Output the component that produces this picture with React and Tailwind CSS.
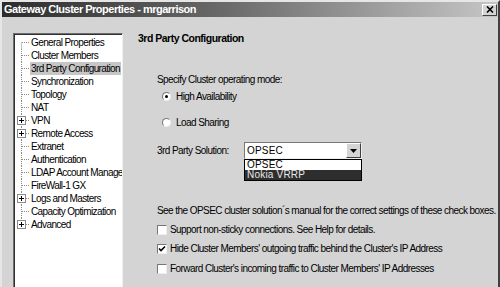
import React from 'react';

const font = { fontFamily: '"Liberation Sans", Arial, sans-serif' };

const treeItems = [
  { label: 'General Properties' },
  { label: 'Cluster Members' },
  { label: '3rd Party Configuration', selected: true },
  { label: 'Synchronization' },
  { label: 'Topology' },
  { label: 'NAT' },
  { label: 'VPN', plus: true },
  { label: 'Remote Access', plus: true },
  { label: 'Extranet' },
  { label: 'Authentication' },
  { label: 'LDAP Account Management' },
  { label: 'FireWall-1 GX' },
  { label: 'Logs and Masters', plus: true },
  { label: 'Capacity Optimization' },
  { label: 'Advanced', plus: true },
];

const TreeRow = ({ item, first, last }) => (
  <div className="flex items-center h-[13px]">
    <svg width="15" height="13" className="shrink-0">
      <line
        x1="6.5" x2="6.5"
        y1={first ? 6.5 : 0} y2={last ? 6.5 : 13}
        stroke="#8a8a8a" strokeDasharray="1 1"
      />
      <line x1="7" x2="15" y1="6.5" y2="6.5" stroke="#8a8a8a" strokeDasharray="1 1" />
      {item.plus && (
        <g>
          <rect x="2.5" y="2.5" width="8" height="8" fill="#fff" stroke="#8a8a8a" />
          <line x1="4" x2="9" y1="6.5" y2="6.5" stroke="#000" />
          <line x1="6.5" x2="6.5" y1="4" y2="9" stroke="#000" />
        </g>
      )}
    </svg>
    <span className={`px-[1px] leading-[13px] tracking-[-0.6px] ${item.selected ? 'bg-[#c6c6c6]' : ''}`}>{item.label}</span>
  </div>
);

const Radio = ({ checked, label }) => (
  <div className="flex items-center h-[13px] pl-[5px] gap-[5px]">
    <span className="w-[9px] h-[9px] rounded-full bg-white border border-t-[#777] border-l-[#777] border-r-[#eee] border-b-[#eee] flex items-center justify-center">
      {checked && <span className="w-[3px] h-[3px] rounded-full bg-black" />}
    </span>
    <span>{label}</span>
  </div>
);

const Checkbox = ({ checked, label, className = '' }) => (
  <div className={`flex items-center h-[13px] gap-[3px] ${className}`}>
    <span className="w-[10px] h-[10px] bg-white border border-t-[#777] border-l-[#777] border-r-[#eee] border-b-[#eee] flex items-center justify-center">
      {checked && (
        <svg width="8" height="8" viewBox="0 0 8 8">
          <path d="M1 3.5 L3 5.5 L7 1.5" stroke="#000" strokeWidth="1.6" fill="none" />
        </svg>
      )}
    </span>
    <span>{label}</span>
  </div>
);

export default function App() {
  return (
    <div
      className="w-[500px] h-[287px] overflow-hidden bg-[#d4d4d4] border-l-2 border-t-2 border-r-2 border-l-[#e6e6e6] border-t-[#e6e6e6] border-r-[#404040] flex flex-col text-[10px] tracking-[-0.5px] text-black"
      style={font}
    >
      {/* Title bar */}
      <div className="h-[15px] shrink-0 flex items-center justify-between pl-[2px] pr-[1px] bg-[linear-gradient(90deg,#2c2c2c,#6a6a6a_45%,#c6c6c6)]">
        <span className="text-white font-bold text-[11px] leading-none">Gateway Cluster Properties - mrgarrison</span>
        <button className="w-[15px] h-[12px] bg-[#d4d4d4] border border-t-white border-l-white border-r-[#404040] border-b-[#404040] flex items-center justify-center">
          <svg width="8" height="7" viewBox="0 0 8 7">
            <path d="M1 0.5 L7 6.5 M7 0.5 L1 6.5" stroke="#000" strokeWidth="1.6" />
          </svg>
        </button>
      </div>

      {/* Body */}
      <div className="flex flex-1 min-h-0">
        {/* Tree */}
        <div className="ml-[11px] mt-[16px] w-[110px] shrink-0 bg-white border-l border-t border-r border-l-[#6e6e6e] border-t-[#6e6e6e] border-r-[#f0f0f0] shadow-[inset_1px_1px_0_#303030] overflow-hidden whitespace-nowrap pt-[2px] pl-[1px]">
          {treeItems.map((item, i) => (
            <TreeRow key={item.label} item={item} first={i === 0} last={i === treeItems.length - 1} />
          ))}
        </div>

        {/* Right panel */}
        <div className="flex flex-col pl-[15px] pt-[15px] whitespace-nowrap">
          <div className="font-bold text-[10.5px] leading-[13px]">3rd Party Configuration</div>

          <div className="pl-[19px] flex flex-col tracking-[-0.56px]">
            <div className="mt-[28px] leading-[13px]">Specify Cluster operating mode:</div>
            <div className="mt-[4px]"><Radio checked label="High Availability" /></div>
            <div className="mt-[13px]"><Radio label="Load Sharing" /></div>

            <div className="mt-[13px] flex items-center h-[17px]">
              <span className="w-[87px] shrink-0">3rd Party Solution:</span>
              <div className="relative">
                <div className="w-[118px] h-[17px] bg-white border border-t-[#777] border-l-[#777] border-r-[#eee] border-b-[#eee] flex items-center justify-between pl-[2px]">
                  <span className="tracking-[0.2px]">OPSEC</span>
                  <div className="w-[15px] h-[15px] bg-[#d4d4d4] border border-t-white border-l-white border-r-[#404040] border-b-[#404040] flex items-center justify-center">
                    <svg width="7" height="4" viewBox="0 0 7 4">
                      <path d="M0 0 H7 L3.5 4 Z" fill="#000" />
                    </svg>
                  </div>
                </div>
                <div className="absolute left-0 top-[17px] w-[118px] border border-black bg-white flex flex-col">
                  <div className="h-[10px] leading-[10px] pl-[2px] tracking-[0.2px]">OPSEC</div>
                  <div className="h-[10px] leading-[10px] pl-[2px] bg-[#2e2e2e] text-[#e8e8e8] tracking-[0.2px]">Nokia VRRP</div>
                </div>
              </div>
            </div>

            <div className="mt-[45px] leading-[13px]">See the OPSEC cluster solution´s manual for the correct settings of these check boxes.</div>
            <Checkbox className="mt-[6px]" label="Support non-sticky connections. See Help for details." />
            <Checkbox className="mt-[6px]" checked label="Hide Cluster Members' outgoing traffic behind the Cluster's IP Address" />
            <Checkbox className="mt-[7px]" label="Forward Cluster's incoming traffic to Cluster Members'  IP Addresses" />
          </div>
        </div>
      </div>
    </div>
  );
}
